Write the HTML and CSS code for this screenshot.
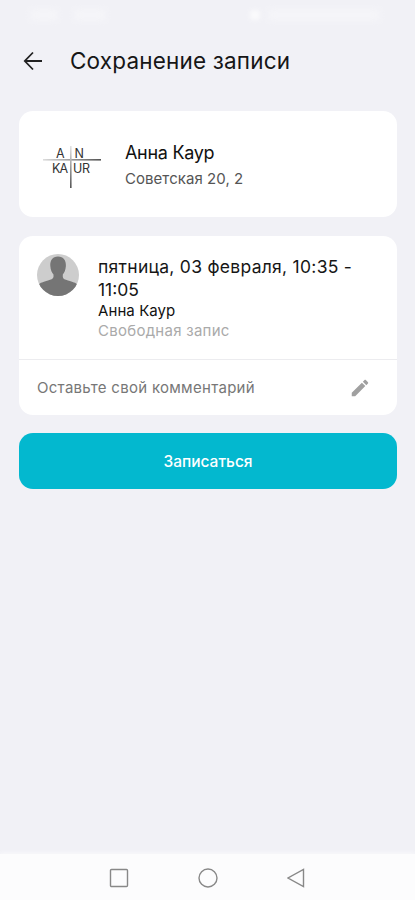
FILE: index.html
```html
<!DOCTYPE html>
<html lang="ru">
<head>
<meta charset="utf-8">
<title>Сохранение записи</title>
<link rel="stylesheet" href="styles.css">
</head>
<body>
<div class="status"><i class="smudge left"></i><i class="smudge mid"></i><i class="smudge dot"></i><i class="smudge right"></i></div>
<header class="header">
  <svg class="back" width="20" height="20" viewBox="0 0 20 20"><path d="M19 10H2M10 1.5L1.8 10L10 18.5"/></svg>
  <h1 class="title">Сохранение записи</h1>
</header>
<main class="content">
  <section class="card place">
    <svg class="logo" width="60" height="46" viewBox="0 0 60 46">
      <defs>
        <linearGradient id="h"><stop offset="0" stop-color="#ddd"/><stop offset="1" stop-color="#555"/></linearGradient>
        <linearGradient id="v" x2="0" y2="1"><stop offset="0" stop-color="#e4e4e4"/><stop offset="1" stop-color="#555"/></linearGradient>
      </defs>
      <rect x="1" y="15" width="58" height="1.6" fill="url(#h)"/>
      <rect x="28" y="2" width="1.6" height="42" fill="url(#v)"/>
      <text x="14" y="13.5">A</text><text x="32.5" y="13.5">N</text>
      <text x="10" y="28.5" textLength="16">KA</text><text x="31" y="28.5" textLength="17">UR</text>
    </svg>
    <div class="place-text">
      <div class="name">Анна Каур</div>
      <div class="address">Советская 20, 2</div>
    </div>
  </section>
  <section class="card booking">
    <div class="details">
      <svg class="avatar" width="42" height="42" viewBox="0 0 42 42">
        <clipPath id="c"><circle cx="21" cy="21" r="21"/></clipPath>
        <g clip-path="url(#c)"><rect width="42" height="42" fill="#cdcdcd"/>
        <path fill="#757575" d="M21 2.5C15.500 2.500 13 6.500 13.300 12C13.500 16 15 19 16.500 20.500V23C16 25 14 25.500 11 26.500C6 28 3.500 28.500 1 31V42H41V31C38.500 28.500 36 28 31 26.500C28 25.500 26 25 25.800 23V20.500C27.300 19 28.600 16 28.900 12C29.200 6.500 26.500 2.500 21 2.500Z"/></g>
      </svg>
      <div class="info">
        <div class="date"><span class="date-a">пятница, 03 февраля, 10:35 -</span><br><span class="date-b">11:05</span></div>
        <div class="master">Анна Каур</div>
        <div class="service">Свободная запис</div>
      </div>
    </div>
    <div class="comment">
      <span class="placeholder">Оставьте свой комментарий</span>
      <svg width="22" height="22" viewBox="0 0 24 24"><path fill="#a0a0a0" d="M3 17.250V21h3.750L17.810 9.940l-3.750-3.750L3 17.250zM20.710 7.040c.39-.39.39-1.020 0-1.410l-2.340-2.340c-.39-.39-1.020-.39-1.410 0l-1.830 1.830 3.750 3.750 1.830-1.830z"/></svg>
    </div>
  </section>
  <button class="submit">Записаться</button>
</main>
<nav class="nav">
  <svg width="20" height="20" viewBox="0 0 20 20"><rect x="1.5" y="1.5" width="17" height="17" rx="1"/></svg>
  <svg width="20" height="20" viewBox="0 0 20 20"><circle cx="10" cy="10" r="9"/></svg>
  <svg width="20" height="20" viewBox="0 0 20 20"><path d="M16.500 1.500V18.500L1 10Z"/></svg>
</nav>
</body>
</html>
```
FILE: styles.css
```css
* { box-sizing: border-box; }
body {
  margin: 0;
  height: 900px;
  display: flex;
  flex-direction: column;
  background: #f1f1f6;
  color: #161616;
  font-family: Inter, Roboto, sans-serif;
  overflow: hidden;
}
svg { flex: none; display: block; }
.status { height: 30px; display: flex; align-items: center; padding-left: 30px; }
.smudge { height: 12px; background: #fff; opacity: .3; filter: blur(3px); border-radius: 4px; }
.left { width: 28px; }
.mid { width: 32px; margin-left: 16px; }
.dot { width: 10px; height: 10px; margin-left: 144px; opacity: .7; filter: blur(2px); }
.right { width: 112px; margin-left: 8px; }
.header { height: 81px; display: flex; padding: 21px 0 0 23px; }
.back { fill: none; stroke: #222; stroke-width: 1.8; }
.title { margin: -5px 0 0 27px; font-size: 22.5px; line-height: 30px; font-weight: 400; letter-spacing: .17px; white-space: nowrap; }
.content { padding: 0 18px 0 19px; display: flex; flex-direction: column; }
.card { background: #fff; border-radius: 14px; }
.place { height: 106px; display: flex; padding: 32px 0 0 23px; }
.logo { margin-top: 1px; font-size: 12.5px; fill: #333; }
.place-text { margin-left: 23px; white-space: nowrap; }
.name { font-size: 18px; line-height: 20px; color: #111; letter-spacing: -.3px; }
.address { margin-top: 6px; font-size: 15px; line-height: 20px; color: #555; letter-spacing: .05px; }
.booking { height: 179px; margin-top: 19px; }
.details { height: 124px; display: flex; padding: 18px 0 0 18px; border-bottom: 1px solid #ececef; }
.info { margin-left: 19px; padding-top: 1px; white-space: nowrap; }
.date { font-size: 17.5px; line-height: 23px; }
.date-a { letter-spacing: .28px; }
.master { font-size: 15px; line-height: 20px; color: #111; letter-spacing: .08px; }
.service { font-size: 15px; line-height: 20px; color: #aaa; letter-spacing: .27px; }
.comment { height: 55px; display: flex; align-items: center; justify-content: space-between; padding: 0 26px 0 18px; font-size: 15px; color: #777; white-space: nowrap; }
.placeholder { letter-spacing: .29px; }
.submit { height: 56px; margin-top: 18px; border: 0; padding: 0; border-radius: 14px; background: #03b8cf; color: #fff; font: 500 15.5px Inter, Roboto, sans-serif; }
.nav { height: 46px; margin-top: auto; background: #fcfcfd; box-shadow: 0 -1px 4px #fafafc; display: flex; justify-content: center; gap: 69px; padding-top: 14px; }
.nav svg { fill: none; stroke: #888; stroke-width: 1.4; }
```
